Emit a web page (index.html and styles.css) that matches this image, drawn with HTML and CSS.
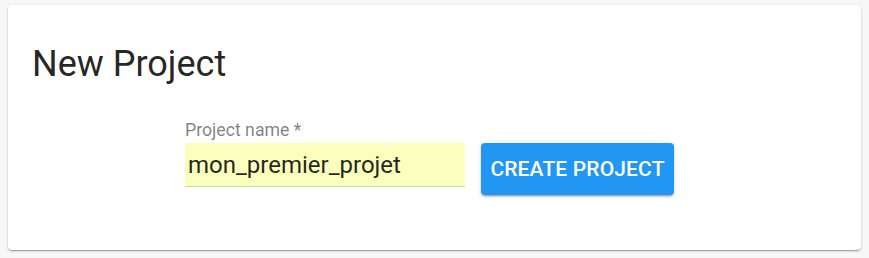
FILE: index.html
```html
<!DOCTYPE html>
<html lang="en">
<head>
<meta charset="utf-8">
<title>New Project</title>
<link rel="stylesheet" href="styles.css">
</head>
<body>
<div class="card">
  <h1 class="title">New Project</h1>
  <form class="row">
    <div class="field">
      <label class="label" for="pname">Project name *</label>
      <input class="input" id="pname" type="text" value="mon_premier_projet">
    </div>
    <button class="btn" type="button">CREATE PROJECT</button>
  </form>
</div>
</body>
</html>
```
FILE: styles.css
```css
html, body {
  margin: 0;
  padding: 0;
}
body {
  background: #f7f7f7;
  font-family: Roboto, "Liberation Sans", sans-serif;
}
.card {
  margin: 5px 8px 8px 8px;
  height: 245px;
  box-sizing: border-box;
  background: #fff;
  border-radius: 4px;
  box-shadow: 0 1px 3px rgba(0,0,0,0.2), 0 1px 1px rgba(0,0,0,0.14), 0 2px 1px -1px rgba(0,0,0,0.12);
  padding: 38px 24px 0 24px;
}
.title {
  margin: 0;
  font-size: 36px;
  font-weight: 400;
  line-height: 42px;
  color: rgba(0,0,0,0.87);
}
.row {
  margin: 37px 0 0 0;
  padding-right: 10px;
  display: flex;
  justify-content: center;
  align-items: flex-start;
}
.field {
  display: flex;
  flex-direction: column;
}
.label {
  font-size: 17.7px;
  line-height: 16px;
  color: rgba(0,0,0,0.5);
  margin-bottom: 5px;
  padding-left: 0;
}
.input {
  width: 280px;
  height: 44px;
  box-sizing: border-box;
  margin: 0;
  border: 0;
  border-bottom: 1px solid rgba(0,0,0,0.15);
  background: #faffbd;
  padding: 0 3px;
  font-family: Roboto, "Liberation Sans", sans-serif;
  font-size: 24px;
  color: rgba(0,0,0,0.87);
  outline: none;
}
.btn {
  margin: 21px 0 0 16px;
  height: 52px;
  width: 193px;
  padding: 0;
  border: 0;
  border-radius: 4px;
  background: #2196f3;
  color: #fff;
  font-family: Roboto, "Liberation Sans", sans-serif;
  font-size: 21px;
  font-weight: 500;
  letter-spacing: 0.15px;
  box-shadow: 0 3px 1px -2px rgba(0,0,0,0.2), 0 2px 2px 0 rgba(0,0,0,0.14), 0 1px 5px 0 rgba(0,0,0,0.12);
  cursor: pointer;
}
```
